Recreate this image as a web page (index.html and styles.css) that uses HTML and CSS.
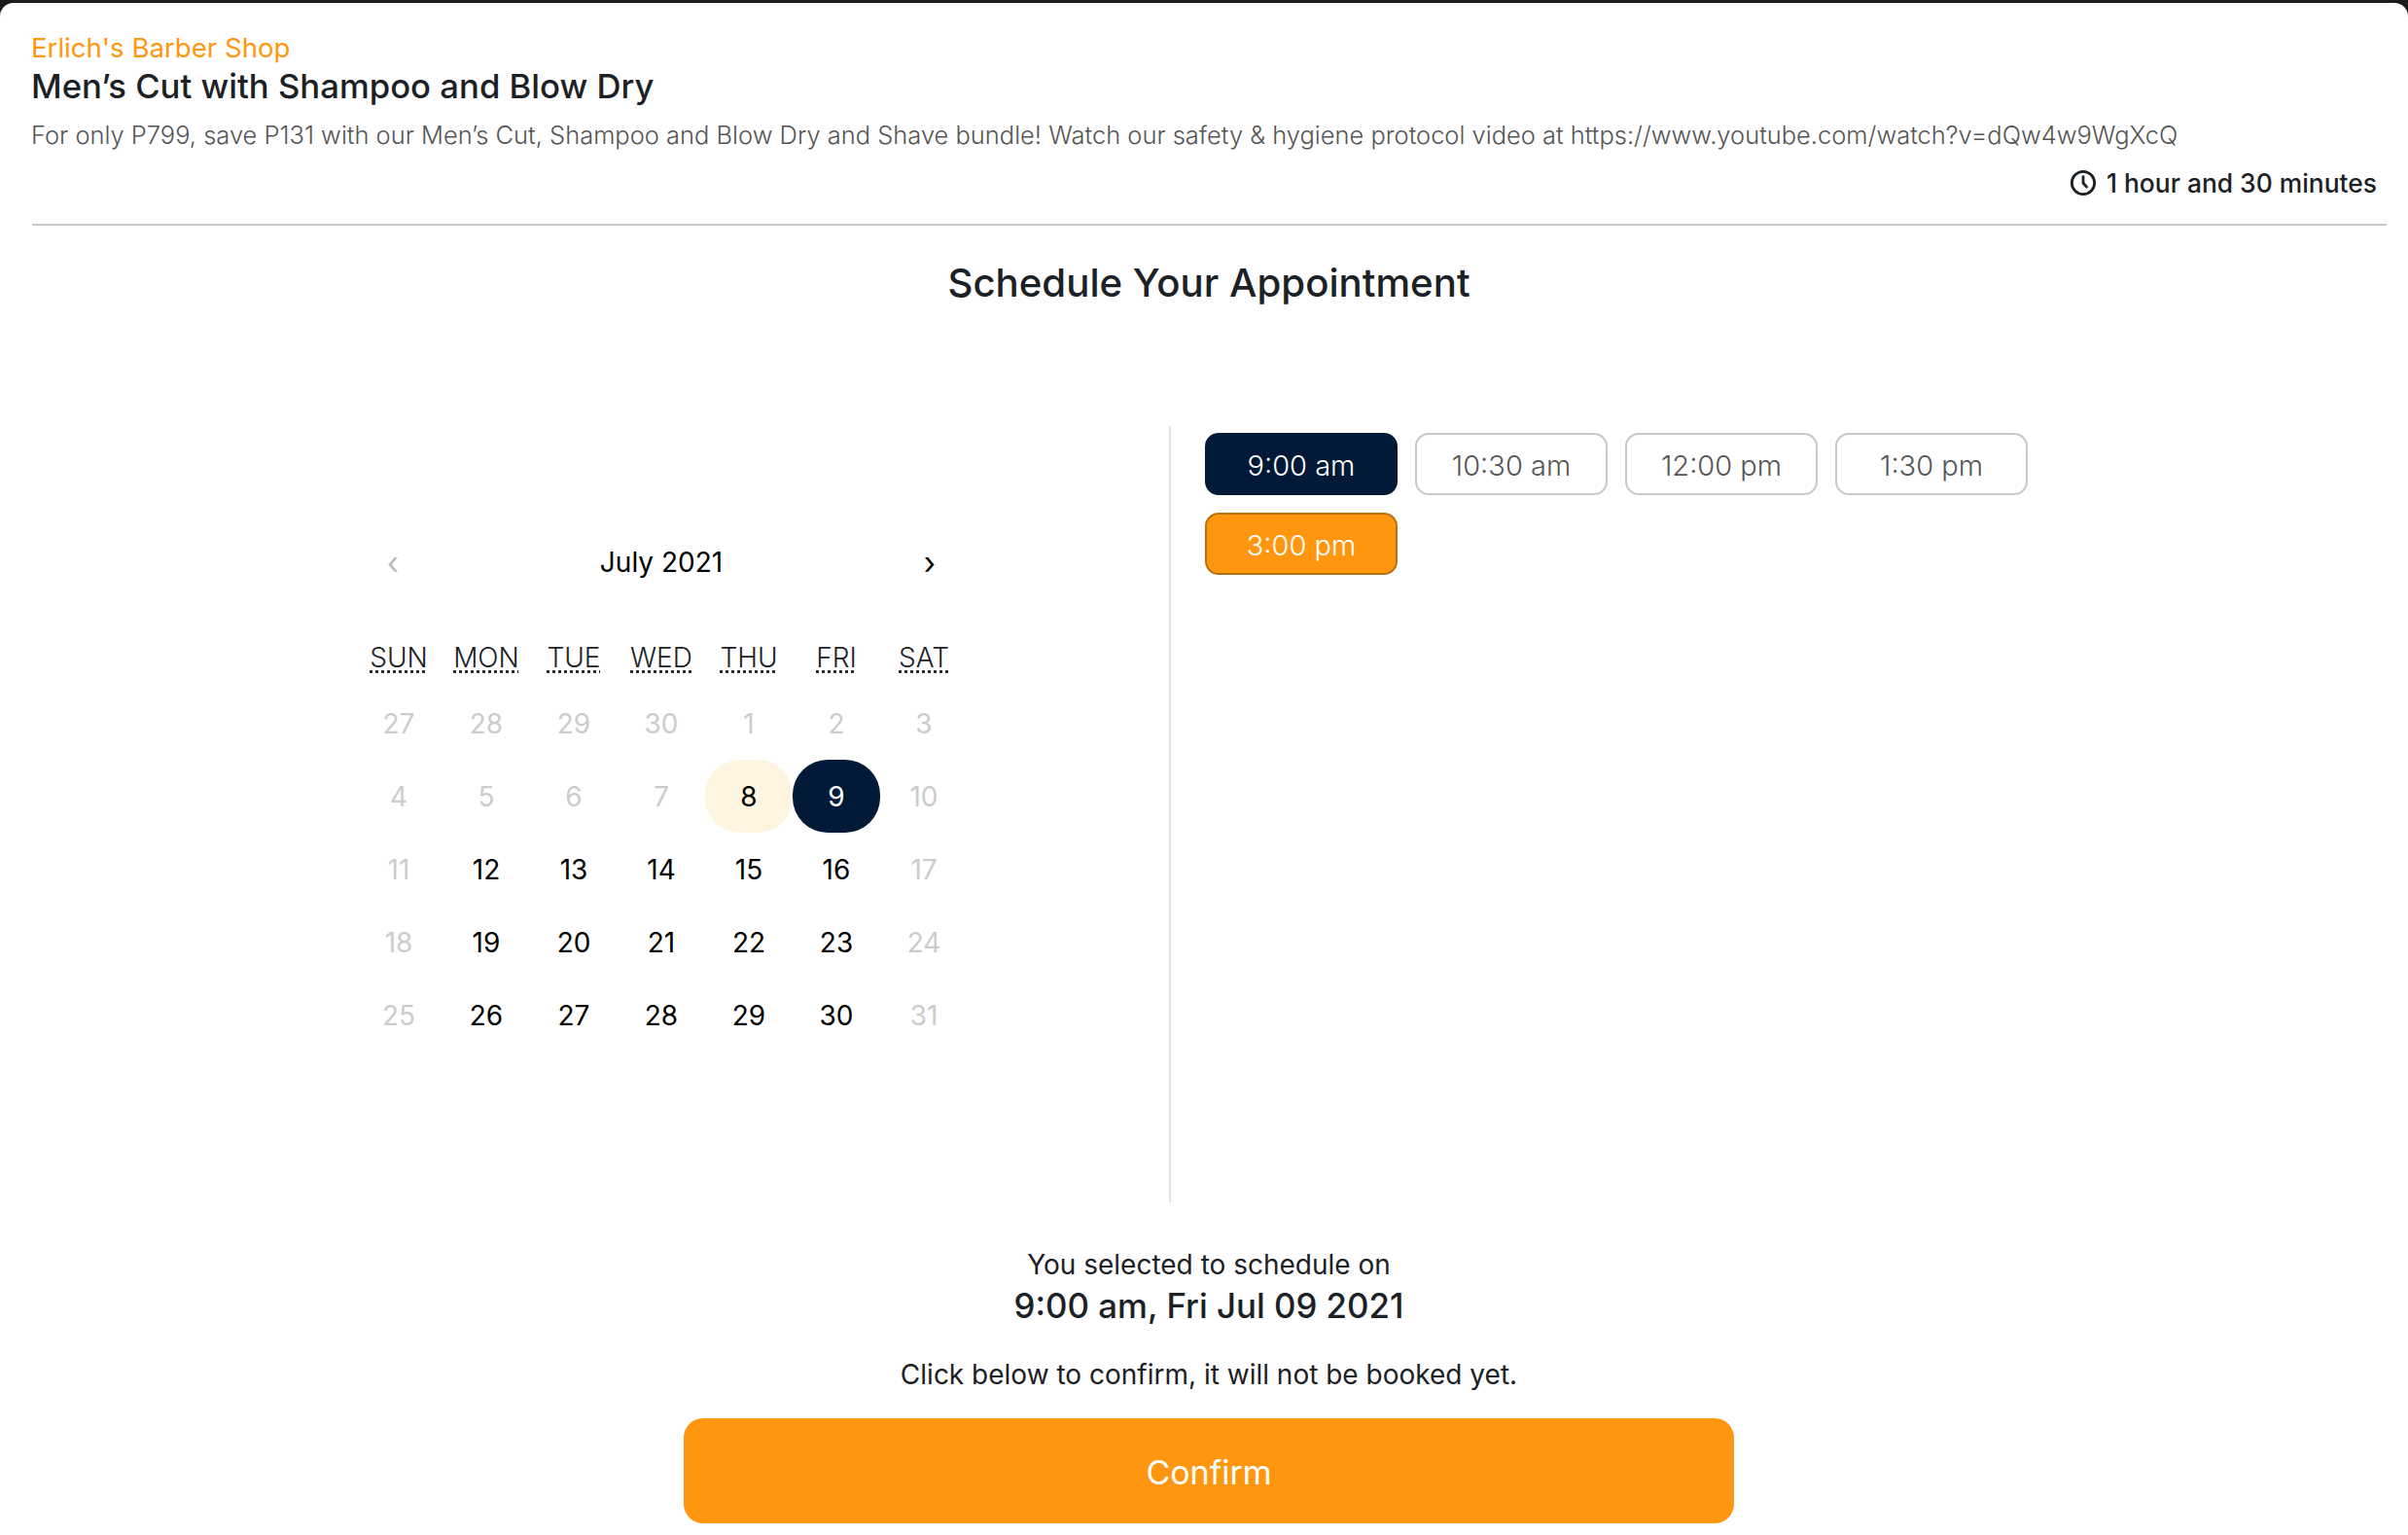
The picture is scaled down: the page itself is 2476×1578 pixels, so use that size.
FILE: index.html
```html
<!DOCTYPE html>
<html lang="en">
<head>
<meta charset="utf-8">
<title>Schedule Your Appointment</title>
<link rel="stylesheet" href="styles.css">
</head>
<body>
<main class="sheet">
  <header class="service">
    <div class="shop">Erlich's Barber Shop</div>
    <h1 class="title">Men’s Cut with Shampoo and Blow Dry</h1>
    <p class="desc">For only P799, save P131 with our Men’s Cut, Shampoo and Blow Dry and Shave bundle! Watch our safety &amp; hygiene protocol video at https://www.youtube.com/watch?v=dQw4w9WgXcQ</p>
    <div class="duration">
      <svg class="clock" viewBox="0 0 24 24" width="28" height="28" fill="none" stroke="currentColor" stroke-width="2.4" stroke-linecap="round" stroke-linejoin="round"><circle cx="12" cy="12" r="10"/><path d="M12 6.5V12l3 3.5"/></svg>
      <span>1 hour and 30 minutes</span>
    </div>
  </header>
  <h2 class="heading">Schedule Your Appointment</h2>
  <section class="picker">
    <div class="calendar-pane">
      <div class="calendar">
        <div class="month">
          <span class="nav nav-off">‹</span>
          <span class="month-name">July 2021</span>
          <span class="nav">›</span>
        </div>
        <div class="grid weekdays">
          <abbr>SUN</abbr><abbr>MON</abbr><abbr>TUE</abbr><abbr>WED</abbr><abbr>THU</abbr><abbr>FRI</abbr><abbr>SAT</abbr>
        </div>
        <div class="grid days">
          <span class="off">27</span><span class="off">28</span><span class="off">29</span><span class="off">30</span><span class="off">1</span><span class="off">2</span><span class="off">3</span>
          <span class="off">4</span><span class="off">5</span><span class="off">6</span><span class="off">7</span><span class="today">8</span><span class="picked">9</span><span class="off">10</span>
          <span class="off">11</span><span>12</span><span>13</span><span>14</span><span>15</span><span>16</span><span class="off">17</span>
          <span class="off">18</span><span>19</span><span>20</span><span>21</span><span>22</span><span>23</span><span class="off">24</span>
          <span class="off">25</span><span>26</span><span>27</span><span>28</span><span>29</span><span>30</span><span class="off">31</span>
        </div>
      </div>
    </div>
    <div class="times">
      <button class="slot slot-picked"><span class="slot-label">9:00 am</span></button>
      <button class="slot"><span class="slot-label">10:30 am</span></button>
      <button class="slot"><span class="slot-label">12:00 pm</span></button>
      <button class="slot"><span class="slot-label">1:30 pm</span></button>
      <button class="slot slot-hot"><span class="slot-label">3:00 pm</span></button>
    </div>
  </section>
  <section class="summary">
    <div class="sum-line">You selected to schedule on</div>
    <div class="sum-date">9:00 am, Fri Jul 09 2021</div>
    <div class="sum-note">Click below to confirm, it will not be booked yet.</div>
    <button class="confirm">Confirm</button>
  </section>
</main>
</body>
</html>
```
FILE: styles.css
```css
* { box-sizing: border-box; }
html, body { margin: 0; height: 100%; }
body {
  background: #1c1c1c;
  padding-top: 3px;
  font-family: Inter, "Liberation Sans", sans-serif;
  color: #1c2126;
  overflow: hidden;
}
.sheet {
  background: #fff;
  height: 1575px;
  border-top-left-radius: 14px;
  border-top-right-radius: 14px;
  padding: 28px 22px 0 32px;
}
.service { border-bottom: 2px solid #c8c8c8; height: 201px; margin-left: 1px; }
.shop { color: #ff9610; font-size: 27.6px; line-height: 36px; margin-left: -1px; }
.title { margin: 0 0 0 -1px; font-size: 34.7px; font-weight: 500; line-height: 43px; }
.desc { margin: 11px 0 0 -1px; font-size: 25.48px; font-weight: 300; line-height: 36px; color: #555; white-space: nowrap; }
.duration {
  display: flex; justify-content: flex-end; align-items: center; gap: 10px;
  margin-top: 13px; padding-right: 10px;
  font-size: 26.4px; font-weight: 500; line-height: 36px;
}
.heading { margin: 33px 0 0; text-align: center; font-size: 40.2px; font-weight: 500; line-height: 52px; }
.picker { display: flex; height: 798px; margin-top: 121px; }
.calendar-pane { width: 1172px; padding: 110px 0 0 333px; border-right: 2px solid #e4e4e4; }
.calendar { width: 630px; }
.month { display: flex; justify-content: space-between; align-items: center; height: 60px; padding: 0 24px; font-size: 28px; color: #000; }
.nav { font-size: 32px; color: #000; width: 30px; text-align: center; }
.nav-off { color: #bbb; }
.grid { display: grid; grid-template-columns: repeat(7, 90px); justify-items: center; }
.weekdays { margin-top: 51px; font-size: 28px; font-weight: 300; }
.weekdays abbr { text-decoration: underline dotted; text-underline-offset: 3px; }
.days { margin-top: 13px; grid-auto-rows: 75px; font-size: 28px; color: #000; }
.days span { width: 90px; height: 75px; display: flex; align-items: center; justify-content: center; }
.days .off { color: #ccc; }
.days .today { background: #fff4df; border-radius: 36px; }
.days .picked { background: #021a38; color: #fff; border-radius: 36px; }
.times { padding: 7px 0 0 35px; display: flex; flex-wrap: wrap; gap: 18px; align-content: flex-start; width: 920px; }
.slot {
  width: 198px; height: 64px; padding: 2px 0 0; border: 2px solid #c8c8c8; border-radius: 14px; background: #fff;
  font: 300 29px Inter, sans-serif; color: #555;
}
.slot-picked { background: #021a38; border-color: #021a38; color: #fff; }
.slot-hot { background: #ff9610; border-color: #b87010; color: #fff; }
.summary { display: flex; flex-direction: column; align-items: center; padding-top: 44px; }
.sum-line { font-size: 28px; line-height: 40px; }
.sum-date { font-size: 34.8px; font-weight: 500; line-height: 44px; }
.sum-note { font-size: 28px; line-height: 40px; margin-top: 29px; }
.confirm {
  margin-top: 25px; width: 1080px; height: 108px; padding: 2px 0 0; border: 0; border-radius: 20px; background: #ff9610; color: #fff;
  font: 400 34px Inter, sans-serif;
}
```
